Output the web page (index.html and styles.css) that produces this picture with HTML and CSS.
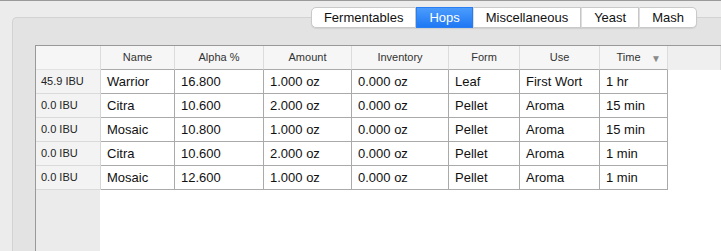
FILE: index.html
```html
<!DOCTYPE html>
<html lang="en">
<head>
    <meta charset="UTF-8">
    <title>Recipe - Hops</title>
    <link rel="stylesheet" href="styles.css">
</head>
<body>
    <div class="tab-panel">
        <div class="tabs">
            <div class="tab">Fermentables</div>
            <div class="tab selected">Hops</div>
            <div class="tab">Miscellaneous</div>
            <div class="tab">Yeast</div>
            <div class="tab">Mash</div>
        </div>

        <div class="grid">
            <div class="row head">
                <div class="cell corner"></div>
                <div class="cell">Name</div>
                <div class="cell">Alpha %</div>
                <div class="cell">Amount</div>
                <div class="cell">Inventory</div>
                <div class="cell">Form</div>
                <div class="cell">Use</div>
                <div class="cell sorted">Time <span class="sort-arrow">&#9660;</span></div>
                <div class="cell filler"></div>
            </div>
            <div class="row">
                <div class="cell rowhead">45.9 IBU</div>
                <div class="cell">Warrior</div>
                <div class="cell">16.800</div>
                <div class="cell">1.000 oz</div>
                <div class="cell">0.000 oz</div>
                <div class="cell">Leaf</div>
                <div class="cell">First Wort</div>
                <div class="cell">1 hr</div>
                <div class="cell filler"></div>
            </div>
            <div class="row">
                <div class="cell rowhead">0.0 IBU</div>
                <div class="cell">Citra</div>
                <div class="cell">10.600</div>
                <div class="cell">2.000 oz</div>
                <div class="cell">0.000 oz</div>
                <div class="cell">Pellet</div>
                <div class="cell">Aroma</div>
                <div class="cell">15 min</div>
                <div class="cell filler"></div>
            </div>
            <div class="row">
                <div class="cell rowhead">0.0 IBU</div>
                <div class="cell">Mosaic</div>
                <div class="cell">10.800</div>
                <div class="cell">1.000 oz</div>
                <div class="cell">0.000 oz</div>
                <div class="cell">Pellet</div>
                <div class="cell">Aroma</div>
                <div class="cell">15 min</div>
                <div class="cell filler"></div>
            </div>
            <div class="row">
                <div class="cell rowhead">0.0 IBU</div>
                <div class="cell">Citra</div>
                <div class="cell">10.600</div>
                <div class="cell">2.000 oz</div>
                <div class="cell">0.000 oz</div>
                <div class="cell">Pellet</div>
                <div class="cell">Aroma</div>
                <div class="cell">1 min</div>
                <div class="cell filler"></div>
            </div>
            <div class="row">
                <div class="cell rowhead">0.0 IBU</div>
                <div class="cell">Mosaic</div>
                <div class="cell">12.600</div>
                <div class="cell">1.000 oz</div>
                <div class="cell">0.000 oz</div>
                <div class="cell">Pellet</div>
                <div class="cell">Aroma</div>
                <div class="cell">1 min</div>
                <div class="cell filler"></div>
            </div>
        </div>
    </div>
</body>
</html>
```

FILE: styles.css
```css
html, body {
    height: 100%;
}
body {
    margin: 0;
    box-sizing: border-box;
    display: flex;
    flex-direction: column;
    background: #ececec;
    border-top: 1px solid #9a9a9a;
    font-family: "Liberation Sans", Arial, sans-serif;
    color: #111;
    overflow: hidden;
}
.tab-panel {
    flex: 1;
    display: flex;
    flex-direction: column;
    margin: 16px 0 0 12px;
    background: #e3e3e3;
    border: 1px solid #d2d2d2;
    border-right: none;
    border-bottom: none;
    border-top-left-radius: 5px;
}
.tabs {
    display: flex;
    justify-content: flex-end;
    margin: -11px 24px 17px 0;
}
.tabs .tab {
    height: 21px;
    box-sizing: border-box;
    padding: 0 12px;
    font-size: 13px;
    line-height: 19px;
    background: #fff;
    border: 1px solid #c9c9c9;
    border-left: 1px solid #dedede;
    box-shadow: 0 1px 1px rgba(0, 0, 0, 0.08);
}
.tabs .tab:first-child {
    border-left-color: #c9c9c9;
    border-radius: 5px 0 0 5px;
}
.tabs .tab:last-child {
    border-radius: 0 5px 5px 0;
}
.tabs .tab.selected {
    color: #fff;
    background: linear-gradient(#4b9cfc, #1f78f4);
    border-color: #2a7ef2;
}
.grid {
    flex: 1;
    margin-left: 22px;
    border-left: 1px solid #999;
    border-top: 1px solid #999;
    background: linear-gradient(to right, #ebebeb 64px, #fff 64px);
}
.row {
    display: grid;
    grid-template-columns: 65px 74px 89px 88px 97px 71px 80px 68px 1fr;
    height: 24px;
}
.cell {
    box-sizing: border-box;
    height: 24px;
    padding: 0 6px;
    font-size: 13px;
    line-height: 23px;
    white-space: nowrap;
    overflow: hidden;
    background: #fff;
    border-right: 1px solid #aaa;
    border-bottom: 1px solid #aaa;
}
.row .filler {
    background: transparent;
    border: none;
}
.head .cell {
    font-size: 11px;
    color: #333;
    text-align: center;
    background: #f6f6f6;
    border-right: 1px solid #dcdcdc;
}
.head .filler {
    background: #efefef;
    border-bottom: none;
}
.head .corner {
    background: #f6f6f6;
    border-bottom-color: #e2e2e2;
}
.head .sorted {
    position: relative;
    padding-right: 16px;
}
.sort-arrow {
    position: absolute;
    right: 6px;
    top: 1px;
    font-size: 10px;
    color: #8a8a8a;
}
.row .rowhead {
    padding-left: 5px;
    font-size: 11px;
    color: #222;
    background: #f3f3f3;
    border-right-color: #d6d6d6;
    border-bottom-color: #dadada;
}
```
